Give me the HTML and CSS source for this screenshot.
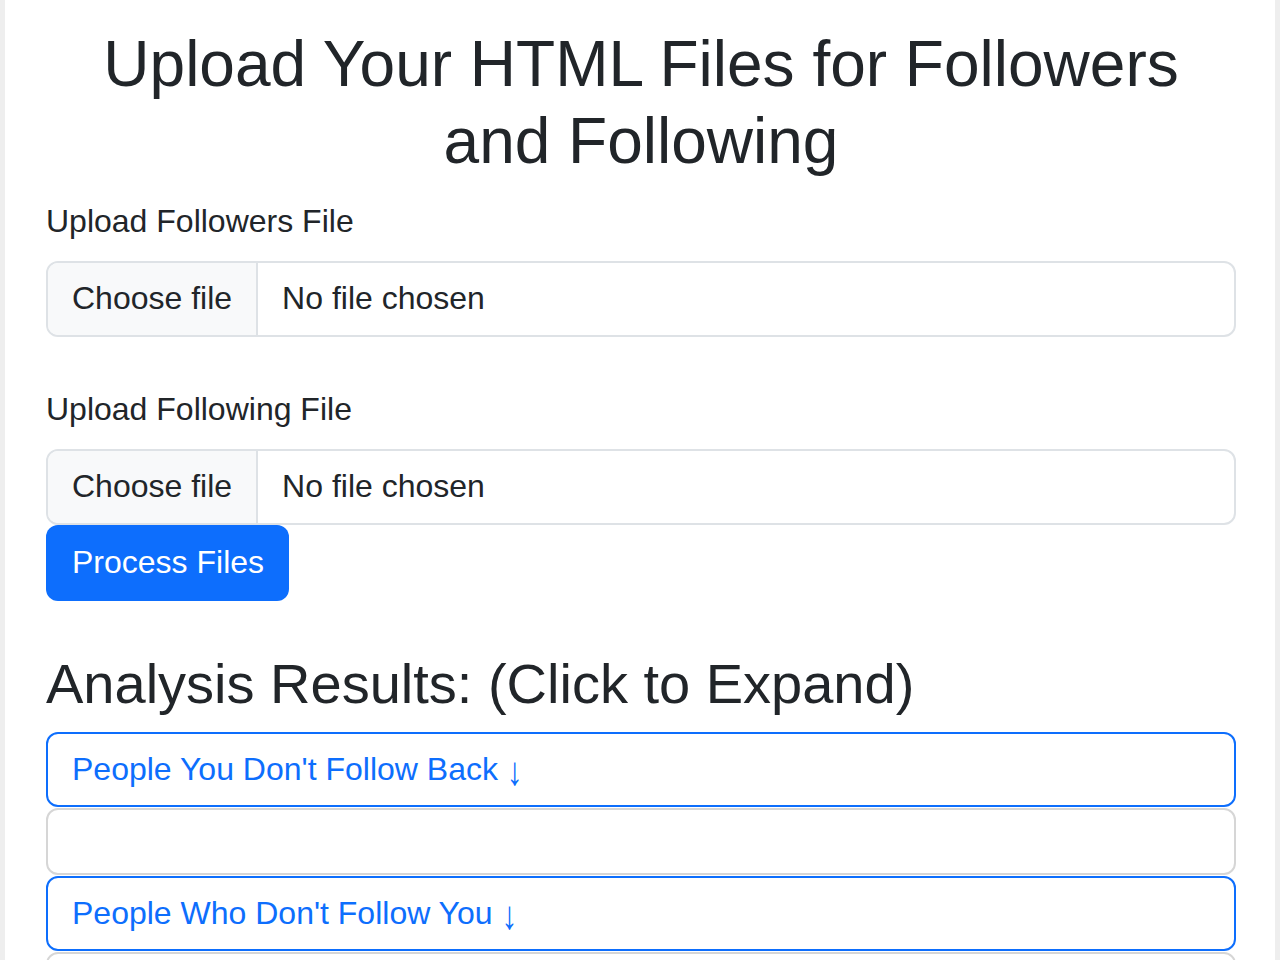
FILE: index.html
```html
<!DOCTYPE html>
<html>

	<head>
		<meta charset="utf-8" />
		<meta name="viewport" content="width=device-width">
		<title>Followers Analyzer</title>
		<link rel="stylesheet" href="styles.css">
	</head>

	<body>
		<div class="page">
			<h1 class="page-tit">Upload Your HTML Files for Followers and Following</h1>

			<div class="field field-first">
				<label class="field-label" for="followers">Upload Followers File</label>
				<label class="file-input">
					<input type="file" id="followers" accept=".html">
					<span class="file-btn">Choose file</span>
					<span class="file-name">No file chosen</span>
				</label>
			</div>

			<div class="field">
				<label class="field-label" for="following">Upload Following File</label>
				<label class="file-input">
					<input type="file" id="following" accept=".html">
					<span class="file-btn">Choose file</span>
					<span class="file-name">No file chosen</span>
				</label>
			</div>

			<button class="btn-process" type="button">Process Files</button>

			<h2 class="results-tit">Analysis Results: (Click to Expand)</h2>

			<div class="results">
				<button class="btn-toggle" type="button">People You Don't Follow Back <span class="arrow">↓</span></button>
				<div class="result-list"></div>
				<button class="btn-toggle" type="button">People Who Don't Follow You <span class="arrow">↓</span></button>
				<div class="result-list"></div>
			</div>
		</div>
	</body>

</html>
```

FILE: styles.css
```css
/*初始化样式*/

* {
	padding: 0;
	margin: 0;
	box-sizing: border-box;
}

html,
body {
	height: 100%;
}

body {
	background: #eeeeee;
	font-family: "Liberation Sans", Arial, sans-serif;
	color: #212529;
	overflow: hidden;
}

.page {
	margin: 0 5px;
	min-height: 100%;
	padding: 26px 39px 0 41px;
	background: #fff;
}

/*标题*/

.page-tit {
	font-size: 64px;
	font-weight: normal;
	line-height: 1.2;
	text-align: center;
	margin-bottom: 17px;
}

.field-label {
	display: block;
	font-size: 32px;
	line-height: 1.5;
	margin-bottom: 16px;
}

.field-first {
	margin-bottom: 48px;
}

/*文件选择框*/

.file-input {
	display: flex;
	height: 76px;
	border: 2px solid #dee2e6;
	border-radius: 12px;
	overflow: hidden;
	font-size: 32px;
	cursor: pointer;
}

.file-input input {
	display: none;
}

.file-btn {
	display: flex;
	align-items: center;
	padding: 0 24px;
	background: #f8f9fa;
	border-right: 2px solid #dee2e6;
}

.file-name {
	display: flex;
	align-items: center;
	padding: 0 24px;
}

.btn-process {
	display: block;
	height: 76px;
	padding: 0 25px 0 26px;
	border: none;
	border-radius: 12px;
	background: #0d6efd;
	color: #fff;
	font-family: inherit;
	font-size: 32px;
	cursor: pointer;
}

/*结果区域*/

.results-tit {
	font-size: 56px;
	font-weight: normal;
	line-height: 1.2;
	margin-top: 49px;
	margin-bottom: 15px;
}

.btn-toggle {
	display: block;
	width: 100%;
	height: 75px;
	padding: 0 24px;
	border: 2px solid #0d6efd;
	border-radius: 12px;
	background: #fff;
	color: #0d6efd;
	font-family: inherit;
	font-size: 32px;
	text-align: left;
	cursor: pointer;
}

.arrow {
	display: inline-block;
	transform: scaleY(1.25) translateY(2px);
}

.result-list {
	height: 67px;
	margin: 1px 0;
	border: 2px solid #d6d6d6;
	border-radius: 12px;
}
```
